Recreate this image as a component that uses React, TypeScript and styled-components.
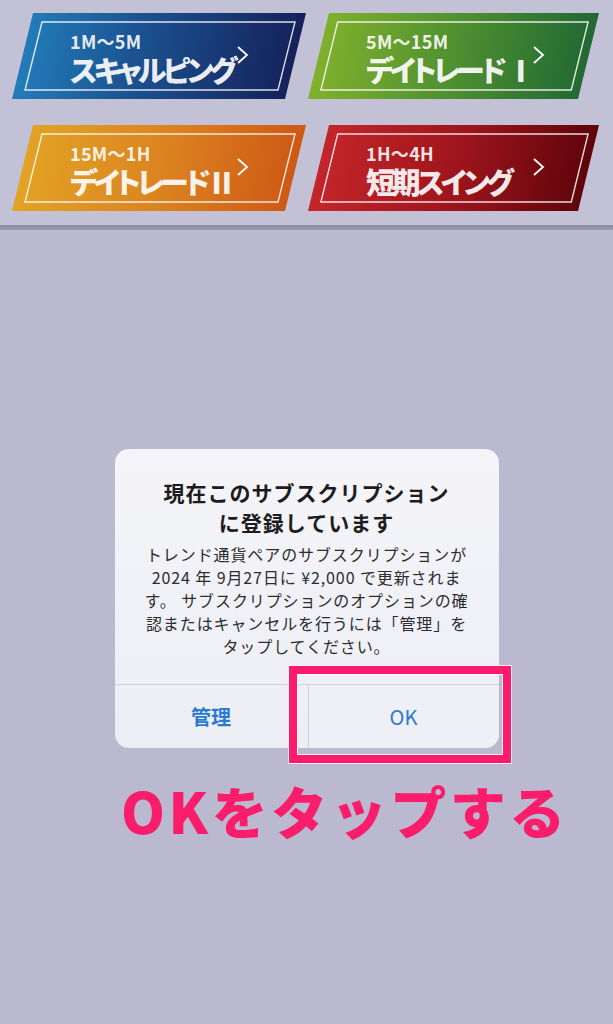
import React from 'react';
import styled, { createGlobalStyle } from 'styled-components';

const GlobalStyle = createGlobalStyle`
  html, body {
    margin: 0;
    padding: 0;
    background: #bab9cf;
  }
  body {
    font-family: "Noto Sans CJK JP", "Noto Sans", sans-serif;
  }
`;

type Tone = 'blue' | 'green' | 'orange' | 'red';

const gradients: Record<Tone, string> = {
  blue: 'linear-gradient(100deg, #2482bf 0%, #1b4f8e 45%, #141c55 100%)',
  green: 'linear-gradient(100deg, #86b52c 0%, #4f9030 50%, #1b6334 100%)',
  orange: 'linear-gradient(100deg, #e2a726 0%, #dc8420 50%, #cc5314 100%)',
  red: 'linear-gradient(100deg, #c8282b 0%, #a0151d 50%, #560208 100%)',
};

const modes = [
  { range: '1M〜5M', name: 'スキャルピング', tone: 'blue' as Tone },
  { range: '5M〜15M', name: 'デイトレード Ⅰ', tone: 'green' as Tone },
  { range: '15M〜1H', name: 'デイトレードⅡ', tone: 'orange' as Tone },
  { range: '1H〜4H', name: '短期スイング', tone: 'red' as Tone },
];

const Chevron = () => (
  <svg width="13" height="20" viewBox="0 0 13 20" fill="none">
    <path d="M2 2 L11 10 L2 18" stroke="#fff" strokeWidth="1.8" strokeLinejoin="miter" />
  </svg>
);

const Frame = () => (
  <FrameSvg viewBox="0 0 294 86" preserveAspectRatio="none">
    <polygon
      points="30,9 283,9 266,77 13,77"
      fill="none"
      stroke="rgba(255,255,255,0.85)"
      strokeWidth="1.4"
      vectorEffect="non-scaling-stroke"
    />
  </FrameSvg>
);

const App = () => {
  return (
    <Page>
      <GlobalStyle />
      <ModeGrid>
        {modes.map((m) => (
          <ModeButton key={m.range} $tone={m.tone}>
            <Frame />
            <ModeText>
              <Range>{m.range}</Range>
              <ModeName>{m.name}</ModeName>
            </ModeText>
            <Chevron />
          </ModeButton>
        ))}
      </ModeGrid>
      <Divider />
      <Main>
        <DialogWrap>
          <Dialog>
            <DialogBody>
              <Title>
                現在このサブスクリプション
                <br />
                に登録しています
              </Title>
              <Message>
                トレンド通貨ペアのサブスクリプションが
                <br />
                2024 年 9月27日に ¥2,000 で更新されま
                <br />
                す。 サブスクリプションのオプションの確
                <br />
                認またはキャンセルを行うには「管理」を
                <br />
                タップしてください。
              </Message>
            </DialogBody>
            <Actions>
              <ActionButton $weight={700}>管理</ActionButton>
              <ActionButton $weight={400} $lit>
                OK
              </ActionButton>
            </Actions>
          </Dialog>
          <Highlight />
        </DialogWrap>
        <Caption>OKをタップする</Caption>
      </Main>
    </Page>
  );
};

export default App;

const Page = styled.div`
  width: 613px;
  min-height: 1024px;
  background: #bab9cf;
  overflow: hidden;
`;

const ModeGrid = styled.div`
  display: grid;
  grid-template-columns: 294px 291px;
  grid-auto-rows: 86px;
  column-gap: 2px;
  row-gap: 26px;
  padding: 13px 0 14px 12px;
  background: #c2c1d6;
`;

const ModeButton = styled.div<{ $tone: Tone }>`
  position: relative;
  display: flex;
  align-items: center;
  background: ${(p) => gradients[p.$tone]};
  clip-path: polygon(21px 0, 100% 0, calc(100% - 21px) 100%, 0 100%);
  color: #fff;

  & > svg:last-child {
    margin-top: -2px;
  }
`;

const FrameSvg = styled.svg`
  position: absolute;
  inset: 0;
  width: 100%;
  height: 100%;
`;

const ModeText = styled.div`
  width: 166px;
  padding-left: 58px;
  padding-top: 2px;
  display: flex;
  flex-direction: column;
  white-space: nowrap;
  flex-shrink: 0;
`;

const Range = styled.span`
  font-size: 18px;
  font-weight: 700;
  line-height: 20px;
  letter-spacing: 0.3px;
  color: rgba(255, 255, 255, 0.9);
`;

const ModeName = styled.span`
  margin-top: 3px;
  font-size: 29px;
  font-weight: 900;
  line-height: 30px;
  letter-spacing: -3.5px;
  font-feature-settings: 'palt';
  color: rgba(255, 255, 255, 0.92);
`;

const Divider = styled.div`
  height: 5px;
  background: linear-gradient(#8a8a9c, #9c9bb0);
`;

const Main = styled.div`
  display: flex;
  flex-direction: column;
  align-items: center;
  padding-top: 219px;
`;

const DialogWrap = styled.div`
  position: relative;
  width: 384px;
`;

const Dialog = styled.div`
  background: linear-gradient(#f5f5f9, #eceef4);
  border-radius: 14px;
  overflow: hidden;
`;

const DialogBody = styled.div`
  padding: 28px 12px 26px;
  text-align: center;
`;

const Title = styled.h2`
  margin: 0 0 6px;
  font-size: 21px;
  font-weight: 700;
  line-height: 30px;
  letter-spacing: 1px;
  color: #1c1c1e;
`;

const Message = styled.p`
  margin: 0;
  font-size: 16px;
  font-weight: 400;
  line-height: 23px;
  letter-spacing: 0.9px;
  color: #2c2c2e;
  white-space: nowrap;
`;

const Actions = styled.div`
  display: grid;
  grid-template-columns: 193px 1fr;
  height: 63px;
  border-top: 1px solid #cfd0d8;
`;

const ActionButton = styled.button<{ $weight: number; $lit?: boolean }>`
  border: none;
  background: ${(p) => (p.$lit ? '#eff0f6' : 'transparent')};
  font-family: "Noto Sans CJK JP", "Noto Sans", sans-serif;
  font-size: 20px;
  font-weight: ${(p) => p.$weight};
  color: #2b7ad0;
  padding: 0;

  & + & {
    border-left: 1px solid #cfd0d8;
  }
`;

const Highlight = styled.div`
  position: absolute;
  left: 174px;
  top: 217px;
  width: 222px;
  height: 97px;
  box-sizing: border-box;
  border: 8px solid #ff1a6b;
  outline: 1px solid rgba(255, 255, 255, 0.8);
  box-shadow: inset 0 0 0 1px rgba(255, 255, 255, 0.9);
`;

const Caption = styled.div`
  align-self: flex-start;
  margin-top: 31px;
  padding-left: 121px;
  font-size: 56px;
  font-weight: 900;
  line-height: 62px;
  letter-spacing: 3.5px;
  color: #fa1d6c;
  white-space: nowrap;
`;
